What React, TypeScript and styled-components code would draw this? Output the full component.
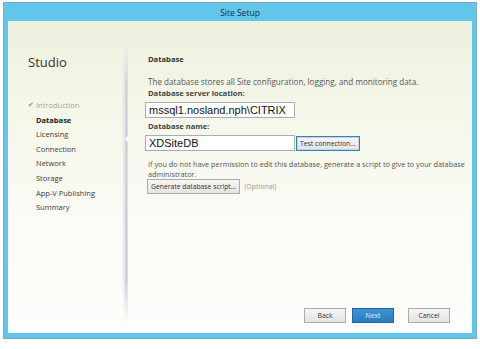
import React from 'react';
import styled, { createGlobalStyle, css } from 'styled-components';

const GlobalStyle = createGlobalStyle`
    html, body {
        margin: 0;
        padding: 0;
        background: #ffffff;
    }
    body {
        font-family: "Open Sans", "Noto Sans", sans-serif;
    }
`;

const Page = styled.div`
    width: 480px;
    height: 349px;
    padding: 2px 0 0 3px;
    box-sizing: border-box;
`;

const Window = styled.div`
    width: 474px;
    height: 337px;
    box-sizing: border-box;
    border: 1px solid #7fa9bd;
    background: #62c6ea;
    padding: 0 4px 5px 4px;
    display: flex;
    flex-direction: column;
`;

const TitleBar = styled.div`
    height: 18px;
    display: flex;
    align-items: center;
    justify-content: center;
    font-size: 8.5px;
    color: #163247;
`;

const Body = styled.div`
    flex: 1;
    display: flex;
    background: linear-gradient(180deg, #eef1de 0%, #f5f7ea 30%, #fbfcf7 70%, #fdfdfb 100%);
`;

const Sidebar = styled.div`
    width: 114px;
    padding: 32px 0 0 20px;
    box-sizing: border-box;
`;

const Brand = styled.div`
    font-size: 13px;
    color: #333;
    margin-bottom: 27px;
`;

const NavList = styled.ul`
    list-style: none;
    margin: 0;
    padding: 0;
`;

const NavItem = styled.li<{ $done?: boolean; $active?: boolean }>`
    font-size: 7.5px;
    height: 14.6px;
    line-height: 14.6px;
    color: #3c3c3c;
    padding-left: 8px;
    position: relative;
    white-space: nowrap;

    ${({ $done }) => $done && css`
        color: #a3a3a3;
    `}

    ${({ $active }) => $active && css`
        font-weight: 700;
        color: #222;
    `}
`;

const Check = styled.span`
    position: absolute;
    left: 0;
    top: 0;
    font-size: 7px;
    color: #8a9a7a;
`;

const Divider = styled.div`
    width: 6px;
    margin: 22px 0 10px 0;
    position: relative;
    background: linear-gradient(90deg, rgba(255,255,255,0) 0%, #d8d9df 60%, #c4c5cc 85%, rgba(255,255,255,0.6) 100%);
    -webkit-mask-image: linear-gradient(180deg, transparent 0%, #000 15%, #000 85%, transparent 100%);
    mask-image: linear-gradient(180deg, transparent 0%, #000 15%, #000 85%, transparent 100%);
`;

const Notch = styled.div`
    position: absolute;
    right: -1px;
    top: 92px;
    width: 0;
    height: 0;
    border-top: 4px solid transparent;
    border-bottom: 4px solid transparent;
    border-right: 4px solid #ffffff;
`;

const Main = styled.div`
    flex: 1;
    padding: 33px 0 0 20px;
    font-size: 7.3px;
    color: #555;
    display: flex;
    flex-direction: column;
`;

const Heading = styled.div`
    font-weight: 700;
    color: #333;
    font-size: 7.6px;
    margin-bottom: 12px;
`;

const Paragraph = styled.div<{ $size?: number; $lh?: number; $gap?: number }>`
    font-size: ${({ $size }) => $size ?? 7.3}px;
    line-height: ${({ $lh }) => $lh ?? 11}px;
    margin-bottom: ${({ $gap }) => $gap ?? 0}px;
    white-space: nowrap;
`;

const Label = styled.div`
    font-weight: 700;
    font-size: 7.6px;
    color: #444;
    line-height: 11px;
    margin-bottom: 3px;
`;

const FieldRow = styled.div<{ $gap?: number }>`
    display: flex;
    align-items: center;
    gap: 1px;
    margin-left: -3px;
    margin-bottom: ${({ $gap }) => $gap ?? 0}px;
`;

const TextBox = styled.div`
    width: 150px;
    height: 16px;
    box-sizing: border-box;
    border: 1px solid #a9acb3;
    background: #fff;
    font-family: "Liberation Sans", Arial, sans-serif;
    font-size: 11px;
    color: #111;
    padding-left: 3px;
    display: flex;
    align-items: center;
`;

const Button = styled.div<{ $primary?: boolean; $focused?: boolean; $width?: number }>`
    height: 15px;
    box-sizing: border-box;
    padding: 0 3px;
    min-width: ${({ $width }) => $width ?? 0}px;
    display: flex;
    align-items: center;
    justify-content: center;
    font-size: 6.8px;
    color: #333;
    border: 1px solid #acacac;
    background: linear-gradient(180deg, #f6f6f6 0%, #e4e4e4 100%);

    ${({ $focused }) => $focused && css`
        border: 1px solid #3a7fb5;
        box-shadow: inset 0 0 0 1px #bcd6ea;
    `}

    ${({ $primary }) => $primary && css`
        color: #e8f3fb;
        border: 1px solid #2166a3;
        background: linear-gradient(180deg, #3d95d4 0%, #2a7bbd 100%);
    `}
`;

const ScriptRow = styled.div`
    display: flex;
    align-items: center;
    gap: 4px;
    margin-top: 0;
    margin-left: -1px;
`;

const Optional = styled.span`
    color: #9a9a9a;
    font-size: 7px;
`;

const Spacer = styled.div`
    flex: 1;
`;

const Footer = styled.div`
    display: flex;
    justify-content: flex-end;
    align-items: center;
    padding: 0 22px 10px 0;
`;

const FooterGroup = styled.div`
    display: flex;
    gap: 6px;
    margin-right: 14px;
`;

const steps = ['Introduction', 'Database', 'Licensing', 'Connection', 'Network', 'Storage', 'App-V Publishing', 'Summary'];

const App: React.FC = () => {
    return (
        <Page>
            <GlobalStyle />
            <Window>
                <TitleBar>Site Setup</TitleBar>
                <Body>
                    <Sidebar>
                        <Brand>Studio</Brand>
                        <NavList>
                            {steps.map((step, i) => (
                                <NavItem key={step} $done={i === 0} $active={i === 1}>
                                    {i === 0 && <Check>✔</Check>}
                                    {step}
                                </NavItem>
                            ))}
                        </NavList>
                    </Sidebar>
                    <Divider>
                        <Notch />
                    </Divider>
                    <Main>
                        <Heading>Database</Heading>
                        <Paragraph $size={8.1} $gap={1}>The database stores all Site configuration, logging, and monitoring data.</Paragraph>
                        <Label>Database server location:</Label>
                        <FieldRow $gap={3}>
                            <TextBox>mssql1.nosland.nph\CITRIX</TextBox>
                        </FieldRow>
                        <Label>Database name:</Label>
                        <FieldRow $gap={8}>
                            <TextBox>XDSiteDB</TextBox>
                            <Button $focused>Test connection...</Button>
                        </FieldRow>
                        <Paragraph $lh={10}>If you do not have permission to edit this database, generate a script to give to your database</Paragraph>
                        <Paragraph $lh={10}>administrator.</Paragraph>
                        <ScriptRow>
                            <Button>Generate database script...</Button>
                            <Optional>(Optional)</Optional>
                        </ScriptRow>
                        <Spacer />
                        <Footer>
                            <FooterGroup>
                                <Button $width={42}>Back</Button>
                                <Button $width={42} $primary>Next</Button>
                            </FooterGroup>
                            <Button $width={42}>Cancel</Button>
                        </Footer>
                    </Main>
                </Body>
            </Window>
        </Page>
    );
};

export default App;
